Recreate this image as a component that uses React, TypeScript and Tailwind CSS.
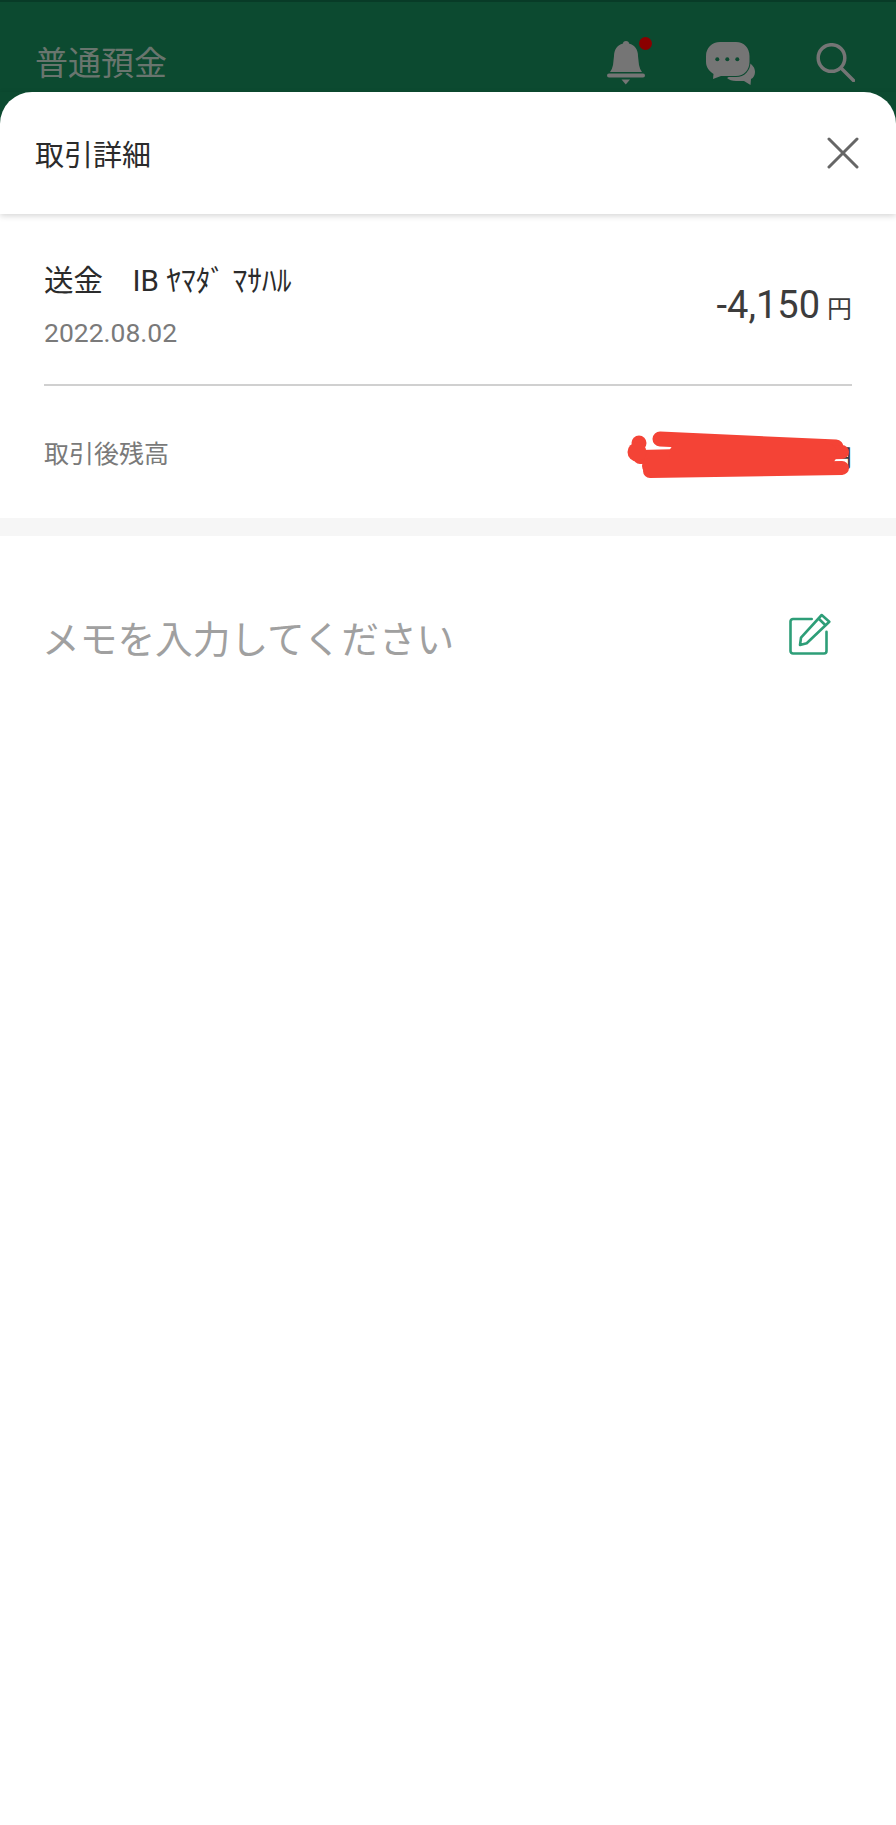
const jp = 'font-["Roboto","Noto_Sans_CJK_JP",sans-serif]'

function BellIcon() {
  return (
    <svg width="38" height="44" viewBox="0 0 38 44" fill="#757575" className="shrink-0">
      <path d="M19 0c2 0 3 1.200 3 2.600C28 4 31 9 31 15l1 9q1 5 3 7H3q2-2 3-7l1-9C7 9 10 4 16 2.600 16 1.200 17 0 19 0z" />
      <rect x="0" y="32.500" width="38" height="4" rx="2" />
      <path d="M14.500 38.500h8.500l-4.200 5z" />
    </svg>
  )
}

function ChatIcon() {
  return (
    <svg width="49" height="43" viewBox="0 0 49 43" className="shrink-0">
      <path
        d="M42 20c5 3 7 6 7 10 0 3-1.500 6-4 7l-.5 6-6.500-4h-8c-4 0-7-1-9-3l10-6z"
        fill="#757575"
      />
      <path
        d="M14 0h16c8 0 13.500 6 13.500 14v6c0 8-5.500 14-13.500 14H15l-8 3 .5-5C3 29 0 25 0 20v-6C0 6 6 0 14 0z"
        fill="#757575"
        stroke="#0c4a30"
        strokeWidth="2"
        paintOrder="stroke"
      />
      <circle cx="11.300" cy="17.300" r="2" fill="#0c4a30" />
      <circle cx="21.300" cy="17.300" r="2" fill="#0c4a30" />
      <circle cx="31.300" cy="17.300" r="2" fill="#0c4a30" />
    </svg>
  )
}

function SearchIcon() {
  return (
    <svg width="39" height="39" viewBox="0 0 39 39" fill="none" className="shrink-0">
      <circle cx="15.500" cy="15" r="13.300" stroke="#757575" strokeWidth="3.500" />
      <path d="M25.500 25.500l12 12" stroke="#757575" strokeWidth="3.500" strokeLinecap="round" />
    </svg>
  )
}

function CloseIcon() {
  return (
    <svg width="32" height="32" viewBox="0 0 32 32" fill="none" className="shrink-0">
      <path d="M2 2l28 28M30 2L2 30" stroke="#666666" strokeWidth="3" strokeLinecap="round" />
    </svg>
  )
}

function MemoIcon() {
  return (
    <svg width="42" height="42" viewBox="0 0 42 42" fill="none" className="shrink-0">
      <path
        d="M22.700 6H4a2.500 2.500 0 0 0-2.500 2.500V38a2.500 2.500 0 0 0 2.500 2.500h31a2.500 2.500 0 0 0 2.500-2.500V18.700"
        stroke="#2e9e78"
        strokeWidth="2.600"
        strokeLinecap="round"
      />
      <path
        d="M32.700 2l7.600 6.700-22.600 21.600L11 32l1-7.300zM29.300 5.300l7.700 7.400"
        stroke="#2e9e78"
        strokeWidth="2.600"
        strokeLinejoin="round"
      />
    </svg>
  )
}

export default function App() {
  return (
    <div className={`flex h-[1825px] flex-col overflow-hidden border-t-2 border-[#083b27] bg-[#0c4a30] ${jp}`}>
      <header className="flex h-[90px] shrink-0 items-start justify-between pl-[35px] pr-[41px] pt-[39px]">
        <h1 className="mt-[3px] text-[33px] leading-[40px] text-[#69756e]">普通預金</h1>
        <div className="flex items-start gap-[61px]">
          <div className="relative">
            <BellIcon />
            <span className="absolute right-[-7px] top-[-4px] size-[13px] rounded-full bg-[#8a0000]" />
          </div>
          <div className="mt-[1px]">
            <ChatIcon />
          </div>
          <div className="mt-[2px]">
            <SearchIcon />
          </div>
        </div>
      </header>

      <div className="flex flex-1 flex-col rounded-t-[32px] bg-white">
        <div className="flex h-[122px] shrink-0 items-center justify-between pl-[35px] pr-[37px] shadow-[0_2px_6px_rgba(0,0,0,0.16)]">
          <h2 className="mt-[6px] text-[29px] leading-[36px] text-[#2b2b2b]">取引詳細</h2>
          <CloseIcon />
        </div>

        <section className="flex h-[304px] shrink-0 flex-col px-[44px]">
          <div className="flex h-[172px] items-center justify-between border-b-2 border-[#d0d0d0]">
            <div className="mt-[13px]">
              <p className="text-[29.500px] leading-[36px] text-[#2b2b2b]">送金　IB ﾔﾏﾀﾞ ﾏｻﾊﾙ</p>
              <p className="mt-[18px] text-[26.500px] leading-[32px] text-[#7a7a7a]">2022.08.02</p>
            </div>
            <p className="mt-[12px] flex items-baseline text-[#3c3c3c]">
              <span className="text-[38px] leading-[46px]">-4,150</span>
              <span className="ml-[7px] text-[25px] leading-[32px]">円</span>
            </p>
          </div>
          <div className="relative flex flex-1 items-center justify-between">
            <p className="mt-[6px] text-[25px] leading-[32px] text-[#7a7a7a]">取引後残高</p>
            <span className="mt-[13px] text-[25px] leading-[32px] text-[#3c3c3c]">円</span>
            {/* 残高の塗りつぶし */}
            <svg
              width="226"
              height="52"
              viewBox="0 0 226 52"
              fill="none"
              className="absolute right-0 top-[44px]"
            >
              <g stroke="#f44336" strokeLinecap="round">
                <path d="M34 9l176 8" strokeWidth="15" />
                <path d="M14 27l202-5" strokeWidth="14" />
                <path d="M24 41l192-3" strokeWidth="14" />
                <path d="M54 24h146" strokeWidth="22" />
                <path d="M24 36h176" strokeWidth="16" />
              </g>
              <circle cx="13" cy="13" r="7.500" fill="#f44336" />
              <circle cx="11" cy="22" r="9.500" fill="#f44336" />
            </svg>
          </div>
        </section>

        <div className="h-[18px] shrink-0 bg-[#f6f6f6]" />

        <div className="flex items-start justify-between pl-[42px] pr-[65px] pt-[74px]">
          <p className="mt-[6px] text-[37.700px] leading-[48px] text-[#a0a0a0]">メモを入力してください</p>
          <div className="mt-[3px]">
            <MemoIcon />
          </div>
        </div>
      </div>
    </div>
  )
}
